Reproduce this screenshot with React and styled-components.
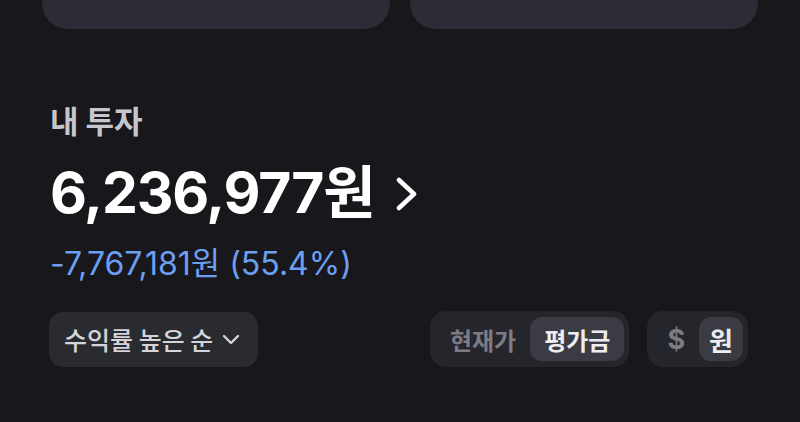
import React from "react";
import styled, { createGlobalStyle } from "styled-components";

const Global = createGlobalStyle`
  html, body {
    margin: 0;
    padding: 0;
    background: #17171c;
  }
  body {
    font-family: Inter, "Noto Sans CJK KR", sans-serif;
    -webkit-font-smoothing: antialiased;
  }
`;

const Page = styled.div`
  width: 800px;
  height: 422px;
  overflow: hidden;
  background: #17171c;
`;

const CardRow = styled.div`
  display: grid;
  grid-template-columns: 1fr 1fr;
  gap: 20px;
  padding: 0 42px;
`;

const Card = styled.div`
  height: 29px;
  background: #2b2c35;
  border-radius: 0 0 26px 26px;
`;

const Section = styled.section`
  padding: 0 52px 0 49px;
`;

const Heading = styled.h2`
  margin: 73px 0 0 1px;
  font-family: "Noto Sans CJK KR", sans-serif;
  font-size: 31px;
  line-height: 36px;
  font-weight: 700;
  color: #c6c6cd;
`;

const TotalRow = styled.div`
  margin-top: 23px;
  display: flex;
  align-items: center;
  height: 64px;
  padding-left: 1px;
`;

const Total = styled.span`
  font-size: 57px;
  line-height: 64px;
  font-weight: 700;
  color: #ffffff;
  letter-spacing: -1.2px;
`;

const Chevron = styled.svg`
  margin-left: 22px;
  margin-top: 2px;
  width: 22px;
  height: 34px;
`;

const Change = styled.div`
  margin-top: 22px;
  padding-left: 1px;
  font-size: 32px;
  line-height: 34px;
  font-weight: 400;
  color: #6c9ff0;
  letter-spacing: 0;
`;

const Controls = styled.div`
  margin-top: 30px;
  display: flex;
  align-items: center;
  justify-content: space-between;
`;

const SortButton = styled.button`
  display: flex;
  align-items: center;
  gap: 9px;
  height: 55px;
  padding: 0 18px 0 15px;
  border: none;
  border-radius: 14px;
  background: #2a2a31;
  color: #d4d4da;
  font-family: "Noto Sans CJK KR", sans-serif;
  font-size: 25px;
  font-weight: 500;
`;

const Toggles = styled.div`
  display: flex;
  gap: 18px;
`;

const Group = styled.div`
  display: flex;
  align-items: center;
  height: 56px;
  padding: 0 5px 0 6px;
  border-radius: 16px;
  background: #25252c;
`;

const Segment = styled.span`
  display: flex;
  align-items: center;
  justify-content: center;
  height: 44px;
  padding: 0 ${(p) => p.$pad}px;
  border-radius: 12px;
  background: ${(p) => (p.$active ? "#3b3b44" : "transparent")};
  color: ${(p) => (p.$active ? "#ececf1" : "#7c7c85")};
  font-family: Inter, "Noto Sans CJK KR", sans-serif;
  font-size: ${(p) => p.$size}px;
  font-weight: 700;
`;

export default function App() {
  return (
    <Page>
      <Global />
      <CardRow>
        <Card />
        <Card />
      </CardRow>
      <Section>
        <Heading>내 투자</Heading>
        <TotalRow>
          <Total>6,236,977원</Total>
          <Chevron viewBox="0 0 22 34">
            <polyline
              points="3,3 18,17 3,31"
              fill="none"
              stroke="#ffffff"
              strokeWidth="4.5"
              strokeLinecap="round"
              strokeLinejoin="round"
            />
          </Chevron>
        </TotalRow>
        <Change>-7,767,181원 (55.4%)</Change>
        <Controls>
          <SortButton>
            수익률 높은 순
            <svg width="18" height="12" viewBox="0 0 18 12">
              <polyline
                points="2,3 9,10 16,3"
                fill="none"
                stroke="#d4d4da"
                strokeWidth="2.4"
                strokeLinecap="round"
                strokeLinejoin="round"
              />
            </svg>
          </SortButton>
          <Toggles>
            <Group>
              <Segment $size={24} $pad={14}>현재가</Segment>
              <Segment $size={24} $pad={14} $active>평가금</Segment>
            </Group>
            <Group>
              <Segment $size={27} $pad={14}>$</Segment>
              <Segment $size={26} $pad={10} $active>원</Segment>
            </Group>
          </Toggles>
        </Controls>
      </Section>
    </Page>
  );
}
